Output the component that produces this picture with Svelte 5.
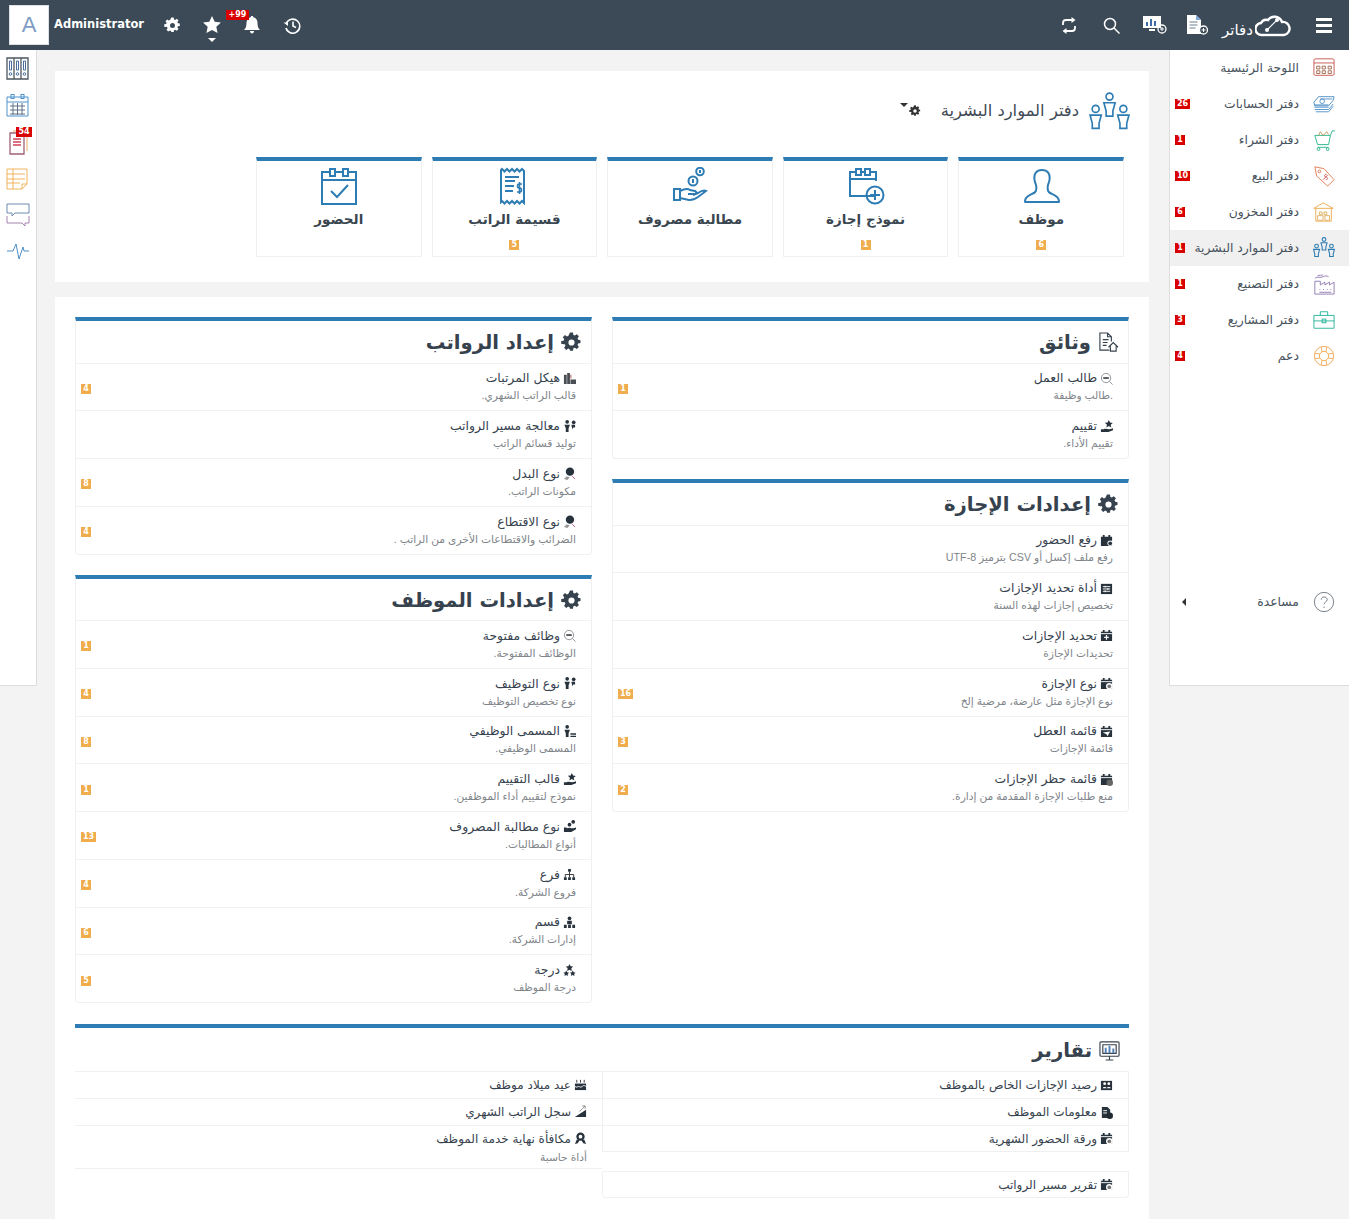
<script>
  const B = "#2e7cb4";

  // 40x40 hr figures, reused in the sidebar and the page header
  const figure = (x, y) =>
    `<circle cx="${x}" cy="${y}" r="3.400"/><path d="M${x - 5.5} ${y + 6}h11l-2.200 8v5h-6.600v-5z"/>`;
  const people = figure(20, 4.5) + figure(6.5, 16.5) + figure(33.5, 16.5);

  const bigIcons = {
    user: `<path d="M20 3c-6 0-8 4-7.600 9 .2 3 1 4 1.600 6 .7 3 .6 5-.8 7-2 2.400-9 3-10 8-.3 1.500 0 2 0 2h33.600s.3-.5 0-2c-1-5-8-5.600-10-8-1.400-2-1.500-4-.8-7 .6-2 1.400-3 1.600-6 .4-5-1.600-9-7.600-9z"/>`,
    leave: `<path d="M27 29H3V5h6M18 5h-4M23 5h6v9"/><path d="M3 12h26"/><rect x="9" y="2" width="5" height="6"/><rect x="18" y="2" width="5" height="6"/><circle cx="28" cy="28" r="8.500"/><path d="M23 28h10M28 23v10"/>`,
    claim: `<path d="M3 22h6v11H3zM9 24c4-2 7-3 10-1l5 1c2 .5 1.500 3-1 3h-6M9 31l9 2c3 .5 6-1 9-3l8-6c-2-1-5 0-8 2l-5 2"/><circle cx="22" cy="14" r="4.500"/><path d="M22 12v4"/><circle cx="29" cy="4.500" r="3.800"/><path d="M29 3v3"/>`,
    slip: `<path d="M7 2l2.500 2.500L12 2l2.500 2.500L17 2l2.500 2.500L22 2l2.500 2.500L27 2l2 2v32l-2-2-2.500 2.500L22 34l-2.500 2.500L17 34l-2.500 2.500L12 34l-2.500 2.500L7 34l-1 1V3z"/><path d="M10 10h14M10 14h10M10 19h9M10 24h8"/><path d="M27 17h-3c-2 0-2 4 0 4h1c2 0 2 4 0 4h-3M24.500 15v12" stroke-width="1.600"/>`,
    attend: `<path d="M9 5H2v32h34V5h-7M22 5h-6"/><path d="M2 13h34"/><rect x="10" y="2" width="5" height="7"/><rect x="23" y="2" width="5" height="7"/><path d="M11 24l6 6 11-12"/>`
  };

  const sideIcons = {
    dash: `<g stroke="#c9544f"><rect x="1" y="2" width="22" height="18" rx="1.500"/><path d="M1 6.500h22"/></g><g stroke="#a0664f"><path d="M4 10h3.500v3H4zM10 10h3.500v3H10zM16.500 10h3.500v3h-3.500zM4 15h3.500v3H4zM10 15h3.500v3H10zM16.500 15h3.500v3h-3.500z"/></g>`,
    money: `<g stroke="#4f8fc7"><path d="M1 10l5-6h17l-1 4-5 6H2zM1 13h16M1.500 15.500h15.500M2 18h15l5-6M3 20.500h14l5-6M8 6.500h13"/><circle cx="10" cy="9" r="2.500"/></g>`,
    cart: `<g stroke="#2bb58a"><path d="M2 7h17l-2 10H5zM19 7l2-5h3M5 20h12"/><circle cx="6" cy="22" r="1.500"/><circle cx="16" cy="22" r="1.500"/></g><path d="M6 7l2-4 3 4M11 7l4-4 2 3" stroke="#c09050"/>`,
    tag: `<g stroke="#e0784f"><path d="M2 2l10 2 11 12-7 7L4 12z"/><circle cx="7" cy="7" r="1.500"/></g><path d="M15 10c-3 0-3 3-1 3s3 3 0 3M11 16l5-5" stroke="#c9544f"/>`,
    stock: `<g stroke="#eda851"><path d="M1 8L11 2l11 6zM3 8v14h17V8"/><path d="M7 12h3v3H7zM12 12h3v3h-3zM5 16h6v5H5zM13 16h5v5h-5z" stroke="#e0b060"/></g>`,
    hr: people,
    factory: `<g stroke="#8f7ab0"><path d="M2 9v14h21V10l-5 3v-3l-5 3v-3l-5 3V9z"/><path d="M7 18h1M11 18h1M15 18h1M19 18h1M7 21h13"/><path d="M2 6c3-3 6 0 9-2 2-1 4-1 6 0M5 3c2-1 4 0 6-1"/></g>`,
    brief: `<g stroke="#25b199"><path d="M1 7h22v14H1zM1 13h22M8 7V3h8v4"/><rect x="10" y="11" width="4" height="4"/></g>`,
    buoy: `<g stroke="#eda851"><circle cx="12" cy="12" r="10.500"/><circle cx="12" cy="12" r="5"/><path d="M9 2l.8 5.500M15 2l-.8 5.500M9 22l.8-5.500M15 22l-.8-5.500M2 9l5.500.8M2 15l5.500-.8M22 9l-5.500.8M22 15l-5.500-.8"/></g>`
  };

  const railIcons = {
    binder: `<g stroke="#4d5660" stroke-width="1.300"><path d="M1 2h7v21H1zM8 2h7v21H8zM15 2h7v21h-7z"/></g><g stroke="#4a6f9f"><path d="M3.500 5h2v9h-2zM10.500 5h2v9h-2zM17.500 5h2v9h-2z"/><circle cx="4.500" cy="18" r="1.300"/><circle cx="11.500" cy="18" r="1.300"/><circle cx="18.500" cy="18" r="1.300"/></g>`,
    cal: `<g stroke="#4f93cc"><path d="M1 4h21v19H1zM1 9h21"/><rect x="5" y="1.500" width="3" height="4"/><rect x="15" y="1.500" width="3" height="4"/></g><path d="M4 13h15M4 17h15M4 21h15M7 10v12M11.500 10v12M16 10v12" stroke="#5d7288"/>`,
    clip: `<path d="M4 4h14v21H4z" stroke="#a06078" stroke-width="1.300"/><path d="M7 2h14v20" stroke="#e8ac60"/><path d="M7 10h8M7 13h8M7 16h8" stroke="#d4405a" stroke-width="1.500"/>`,
    sheet: `<g stroke="#f0b45c"><path d="M1 3h20v15l-5 5H1zM16 23v-5h5"/><path d="M1 8h18M1 13h18M1 17h13M7 3v20"/></g>`,
    chat: `<path d="M1 2h22v9H9l-3 3v-3H1z" stroke="#6f8bb2"/><path d="M1 14v7h15l3 3v-3h4v-7" stroke="#a583ae"/>`,
    pulse: `<path d="M1 12h6l3-7 3 15 4-12 1 4h5" stroke="#4f8fc7"/>`
  };

  // solid dark glyphs next to list rows, drawn on a 14x14 box
  const cal = `<path d="M1 3h12v10H1zM3 1h2v2H3zM9 1h2v2H9z"/>`;
  const small = {
    search: `<g fill="none" stroke="#8a8f96"><circle cx="6.500" cy="6.500" r="5"/><path d="M10 10l3.500 3.500"/></g><path d="M3.500 5.500h6v2h-6z" fill="#555"/>`,
    star: `<path d="M9.500 0l1.300 2.800 3 .3-2.300 2 .7 3-2.700-1.600L6.800 8l.7-3-2.300-2 3-.3zM1 10h3v3H1zM4 10c2-1 4 0 6 0s3-1 4-1v2l-5 2H4z"/>`,
    gearCal: cal + `<circle cx="11" cy="10" r="3" fill="#fff"/><circle cx="11" cy="10" r="2"/>`,
    list: `<path d="M1 2h12v11H1z"/><path d="M3 5h8M3 7.500h8M3 10h8" stroke="#fff"/><path d="M5 4h1v2H5zM8 6.500h1v2H8zM5 9h1v2H5z" fill="#fff"/>`,
    calPlus: cal + `<path d="M1 5h12" stroke="#fff"/><path d="M4.500 9h5M7 6.500v5" stroke="#fff" stroke-width="1.300"/>`,
    calCog: cal + `<path d="M1 5h12" stroke="#fff"/><circle cx="10" cy="10" r="3.500" fill="#fff"/><circle cx="10" cy="10" r="2" fill="#777"/>`,
    calPlane: cal + `<path d="M1 5h12" stroke="#fff"/><path d="M3 8l8-1-3 5-1-2z" fill="#fff"/>`,
    calShield: cal + `<path d="M1 5h12" stroke="#fff"/><circle cx="10.500" cy="10.500" r="3.500" fill="#666"/>`,
    stack: `<path d="M1 3h3v10H1zM4.500 1h3v12h-3zM8 8h6v5H8z" fill="#4a4f55"/><path d="M8 3h1v4H8z" fill="#b05050"/>`,
    run: `<circle cx="4.500" cy="2" r="2"/><path d="M1.500 5h6l-1.500 4v4H3V9z"/><circle cx="11.500" cy="2.500" r="2"/><path d="M9 5h4v3h-2l-1 2z"/>`,
    title: `<circle cx="4.500" cy="2" r="2"/><path d="M1.500 5h6l-1.500 4v4H3V9zM8 9h6v1.500H8zM8 11.500h6V13H8z"/>`,
    coinHand: `<circle cx="7.500" cy="5" r="4.500"/><path d="M1 13l3-3 3 1-2 3" fill="#999"/><path d="M10 10l3 3" stroke="#b58" fill="none"/>`,
    claim: `<circle cx="11" cy="2" r="2"/><circle cx="7" cy="5" r="2"/><path d="M1 8h3v5H1zM4 9c2-1 4-1 5 0h2l3-1v2l-5 3H4z"/>`,
    tree: `<path d="M5.500 1h3v3h-3zM1 10h3v3H1zM5.500 10h3v3h-3zM10 10h3v3h-3z"/><path d="M7 4v6M2.500 10V7h9v3" stroke="#333" fill="none"/>`,
    dept: `<circle cx="7" cy="2.500" r="2"/><path d="M4.500 5h5v4h-5zM1 9.500h3V13H1zM5.500 9.500h3V13h-3zM10 9.500h3V13h-3z"/>`,
    grade: `<path d="M7 0l1.200 2.500 2.800.3-2 1.900.5 2.800L7 6.200 4.500 7.500 5 4.700l-2-1.900 2.800-.3zM3.500 7l1 2 2 .3-1.500 1.400.4 2.100-1.900-1-1.900 1 .4-2.100L.5 9.300l2-.3zM10.500 7l1 2 2 .3-1.500 1.400.4 2.100-1.900-1-1.900 1 .4-2.100-1.500-1.400 2-.3z"/>`,
    cake: `<path d="M1 6h12v7H1z"/><path d="M3 2v3M7 2v3M11 2v3" stroke="#333"/><path d="M1 9c2 2 3 0 4 0s2 2 4 0 3 0 4 0" stroke="#fff" fill="none"/>`,
    chart: `<path d="M1 13L13 5v8z"/><path d="M6 7l6-6M9 1h3v3" stroke="#888" fill="none"/>`,
    medal: `<circle cx="7" cy="5" r="4.500"/><circle cx="7" cy="5" r="2" fill="#fff"/><path d="M3 8l-2 5 3-1 2-3zM11 8l2 5-3-1-2-3z"/>`,
    people: `<path d="M1 2h12v10H1z"/><circle cx="5" cy="5" r="1.500" fill="#fff"/><circle cx="9.500" cy="5" r="1.500" fill="#fff"/><path d="M3 10c0-2 4-2 4 0zM7.500 10c0-2 4-2 4 0z" fill="#fff"/>`,
    info: `<path d="M2 1h6l3 3v9H2z"/><circle cx="10.500" cy="10.500" r="3.500" fill="#1f2a33"/><path d="M3.500 5h4M3.500 7.500h4" stroke="#fff"/>`
  };

  const gear = "M7.300.5h2.400l.3 1.900 1.200.5 1.600-1.100 1.700 1.700-1.100 1.600.5 1.200 1.900.3v2.400l-1.900.3-.5 1.200 1.100 1.600-1.700 1.700-1.600-1.100-1.200.5-.3 1.900H7.300L7 13.900l-1.200-.5-1.600 1.100-1.700-1.700 1.100-1.600-.5-1.200L.2 9.700V7.300L2.100 7l.5-1.200-1.100-1.600 1.700-1.700 1.600 1.100L6 3.100zM8.500 6a2.500 2.500 0 1 0 0 5 2.500 2.500 0 0 0 0-5z";

  const sideItems = [
    { label: "اللوحة الرئيسية", icon: "dash" },
    { label: "دفتر الحسابات", icon: "money", badge: 26 },
    { label: "دفتر الشراء", icon: "cart", badge: 1 },
    { label: "دفتر البيع", icon: "tag", badge: 10 },
    { label: "دفتر المخزون", icon: "stock", badge: 6 },
    { label: "دفتر الموارد البشرية", icon: "hr", badge: 1, active: true },
    { label: "دفتر التصنيع", icon: "factory", badge: 1 },
    { label: "دفتر المشاريع", icon: "brief", badge: 3 },
    { label: "دعم", icon: "buoy", badge: 4 }
  ];

  const rail = ["binder", "cal", "clip", "sheet", "chat", "pulse"];

  const shortcuts = [
    { label: "موظف", icon: "user", badge: 6 },
    { label: "نموذج إجازة", icon: "leave", badge: 1 },
    { label: "مطالبة مصروف", icon: "claim" },
    { label: "قسيمة الراتب", icon: "slip", badge: 5 },
    { label: "الحضور", icon: "attend" }
  ];

  const rightCards = [
    {
      title: "وثائق", icon: "doc",
      items: [
        { t: "طالب العمل", d: ".طالب وظيفة", i: "search", b: 1 },
        { t: "تقييم", d: "تقييم الأداء.", i: "star" }
      ]
    },
    {
      title: "إعدادات الإجازة", icon: "gear",
      items: [
        { t: "رفع الحضور", d: "رفع ملف إكسل أو CSV بترميز UTF-8", i: "gearCal" },
        { t: "أداة تحديد الإجازات", d: "تخصيص إجازات لهذه السنة", i: "list" },
        { t: "تحديد الإجازات", d: "تحديدات الإجازة", i: "calPlus" },
        { t: "نوع الإجازة", d: "نوع الإجازة مثل عارضة، مرضية إلخ", i: "calCog", b: 16 },
        { t: "قائمة العطل", d: "قائمة الإجازات", i: "calPlane", b: 3 },
        { t: "قائمة حظر الإجازات", d: "منع طلبات الإجازة المقدمة من إدارة.", i: "calShield", b: 2 }
      ]
    }
  ];

  const leftCards = [
    {
      title: "إعداد الرواتب", icon: "gear",
      items: [
        { t: "هيكل المرتبات", d: "قالب الراتب الشهري.", i: "stack", b: 4 },
        { t: "معالجة مسير الرواتب", d: "توليد قسائم الراتب", i: "run" },
        { t: "نوع البدل", d: "مكونات الراتب.", i: "coinHand", b: 8 },
        { t: "نوع الاقتطاع", d: "الضرائب والاقتطاعات الأخرى من الراتب .", i: "coinHand", b: 4 }
      ]
    },
    {
      title: "إعدادات الموظف", icon: "gear",
      items: [
        { t: "وظائف مفتوحة", d: "الوظائف المفتوحة.", i: "search", b: 1 },
        { t: "نوع التوظيف", d: "نوع تخصيص التوظيف", i: "run", b: 4 },
        { t: "المسمى الوظيفي", d: "المسمى الوظيفي.", i: "title", b: 8 },
        { t: "قالب التقييم", d: "نموذج لتقييم أداء الموظفين.", i: "star", b: 1 },
        { t: "نوع مطالبة المصروف", d: "أنواع المطالبات.", i: "claim", b: 13 },
        { t: "فرع", d: "فروع الشركة.", i: "tree", b: 4 },
        { t: "قسم", d: "إدارات الشركة.", i: "dept", b: 6 },
        { t: "درجة", d: "درجة الموظف", i: "grade", b: 5 }
      ]
    }
  ];

  const reportsRight = [
    { t: "رصيد الإجازات الخاص بالموظف", i: "people" },
    { t: "معلومات الموظف", i: "info" },
    { t: "ورقة الحضور الشهرية", i: "calCog" }
  ];
  const reportsLeft = [
    { t: "عيد ميلاد موظف", i: "cake" },
    { t: "سجل الراتب الشهري", i: "chart" },
    { t: "مكافأة نهاية خدمة الموظف", d: "أداة حاسبة", i: "medal" }
  ];
</script>

{#snippet cardTitle(title, icon)}
  <h2 class="card-title">
    {#if icon === "gear"}
      <svg class="title-icon" viewBox="0 0 17 17"><path d={gear} fill="#36424e" fill-rule="evenodd" /></svg>
    {:else if icon === "doc"}
      <svg class="title-icon" viewBox="0 0 22 22" fill="none" stroke="#36424e" stroke-width="1.200">
        <path d="M12 19H2V1h8l4 4v5M10 1v4h4M5 8h6M5 11h5M5 14h4" />
        <path d="M11 16l5-5 5 5M13 15v5h6v-5" />
      </svg>
    {:else}
      <svg class="title-icon" viewBox="0 0 22 22" fill="none" stroke="#36424e" stroke-width="1.200">
        <rect x="1" y="2" width="20" height="15" rx="1" />
        <path d="M7 21h8M11 17v4" />
        <path d="M4 5h14v9H4z" />
        <path d="M7 8v6M11 6v8M15 9v5" stroke-width="2" stroke="#4f7fb5" />
      </svg>
    {/if}
    <span>{title}</span>
  </h2>
{/snippet}

{#snippet rowIcon(name)}
  <svg class="row-icon" viewBox="0 0 14 14" fill="#27323c">{@html small[name]}</svg>
{/snippet}

{#snippet listCard(card)}
  <section class="card">
    {@render cardTitle(card.title, card.icon)}
    {#each card.items as item}
      <div class="row">
        <div class="row-text">
          <div class="row-title">{@render rowIcon(item.i)}<span>{item.t}</span></div>
          <div class="row-desc">{item.d}</div>
        </div>
        {#if item.b}<span class="count">{item.b}</span>{/if}
      </div>
    {/each}
  </section>
{/snippet}

<header class="topbar">
  <div class="top-left">
    <div class="avatar">A</div>
    <span class="user">Administrator</span>
    <div class="top-icons">
      <span class="top-btn">
        <svg width="17" height="17" viewBox="0 0 17 17"><path d={gear} fill="#fff" fill-rule="evenodd" /></svg>
      </span>
      <span class="top-btn">
        <svg width="18" height="18" viewBox="0 0 18 18"><path d="M9 0l2.700 5.800 6.300.7-4.700 4.300 1.300 6.200L9 14l-5.600 3 1.300-6.200L0 6.500l6.300-.7z" fill="#fff" /></svg>
        <i class="caret"></i>
      </span>
      <span class="top-btn">
        <svg width="16" height="18" viewBox="0 0 16 18"><path d="M8 0c1 0 1.300.7 1.300 1.300C12 2 13.500 4 13.500 7c0 4 1 5.500 2.500 7H0c1.500-1.500 2.500-3 2.500-7 0-3 1.500-5 4.200-5.700C6.700.7 7 0 8 0zM6 15h4c0 1.500-1 2.500-2 2.500S6 16.500 6 15z" fill="#fff" /></svg>
        <b class="bell-count">+99</b>
      </span>
      <span class="top-btn">
        <svg width="18" height="17" viewBox="0 0 18 17" fill="none" stroke="#fff" stroke-width="1.600"><path d="M3.500 6A7 7 0 1 1 3 11" /><path d="M.5 5.500h4.500V9z" fill="#fff" stroke="none" /><path d="M10 4.500V9l3 1.500" /></svg>
      </span>
    </div>
  </div>
  <div class="top-right">
    <span class="top-btn">
      <svg width="16" height="17" viewBox="0 0 16 17" fill="none" stroke="#fff" stroke-width="1.800"><path d="M2 8V6a3 3 0 0 1 3-3h8M14 9v2a3 3 0 0 1-3 3H3" /><path d="M10.500 0l4 3-4 3zM5.500 11l-4 3 4 3z" fill="#fff" stroke="none" /></svg>
    </span>
    <span class="top-btn">
      <svg width="17" height="17" viewBox="0 0 17 17" fill="none" stroke="#fff" stroke-width="1.500"><circle cx="7" cy="7" r="5.500" /><path d="M11 11l5.500 5.500" /></svg>
    </span>
    <span class="top-btn">
      <svg width="24" height="18" viewBox="0 0 24 18"><path d="M0 0h18v12H0z" fill="#fff" /><path d="M3 10V6h2v4zM7 10V3h2v7zM11 10V5h2v5z" fill="#3c6da8" /><path d="M6 13h6v2H6z" fill="#fff" /><circle cx="19" cy="13" r="4" fill="none" stroke="#fff" stroke-width="1.300" /><path d="M17 13h4M19 11v4" stroke="#fff" /></svg>
    </span>
    <span class="top-btn">
      <svg width="21" height="20" viewBox="0 0 21 20"><path d="M0 0h9l5 5v14H0z" fill="#fff" /><path d="M2.500 7h8M2.500 10h8M2.500 13h6" stroke="#6f7f8f" /><path d="M9 0v5h5z" fill="#7fa6d8" /><circle cx="16.500" cy="15" r="4" fill="#3b4a56" stroke="#fff" stroke-width="1.300" /><path d="M14.500 15h4M16.500 13v4" stroke="#fff" /></svg>
    </span>
    <div class="brand">
      <span>دفاتر</span>
      <svg width="36" height="24" viewBox="0 0 36 24" fill="none" stroke="#fff" stroke-width="2.400"><path d="M9 22H7A6 6 0 0 1 6 10a6 6 0 0 1 7-3A8 8 0 0 1 27 9a6.500 6.500 0 0 1 2 13h-2" /><path d="M9 22h18" /><path d="M12 17l10-10" stroke-width="1.200" /><circle cx="12" cy="17" r="2" fill="#fff" stroke="none" /><circle cx="22" cy="7" r="2" fill="#fff" stroke="none" /></svg>
    </div>
    <div class="burger"><i></i><i></i><i></i></div>
  </div>
</header>

<div class="layout">
  <aside class="rail">
    {#each rail as name}
      <div class="rail-item">
        <svg width="24" height="26" viewBox="0 0 24 26" fill="none">{@html railIcons[name]}</svg>
        {#if name === "clip"}<b class="rail-count">54</b>{/if}
      </div>
    {/each}
  </aside>

  <main class="main">
    <section class="panel hero">
      <div class="hero-head">
        <svg class="hero-icon" viewBox="0 0 40 40" fill="none" stroke={B} stroke-width="1.600">{@html people}</svg>
        <h1>دفتر الموارد البشرية</h1>
        <svg class="hero-gear" viewBox="0 0 17 17"><path d={gear} fill="#333" fill-rule="evenodd" /></svg>
        <i class="hero-caret"></i>
      </div>
      <div class="shortcuts">
        {#each shortcuts as s}
          <article class="shortcut">
            <svg class="shortcut-icon" viewBox="0 0 38 38" fill="none" stroke={B} stroke-width="2">{@html bigIcons[s.icon]}</svg>
            <strong>{s.label}</strong>
            {#if s.badge}<span class="count">{s.badge}</span>{/if}
          </article>
        {/each}
      </div>
    </section>

    <section class="panel content">
      <div class="columns">
        <div class="stack">
          {#each rightCards as card}{@render listCard(card)}{/each}
        </div>
        <div class="stack">
          {#each leftCards as card}{@render listCard(card)}{/each}
        </div>
      </div>

      <section class="reports">
        {@render cardTitle("تقارير", "report")}
        <div class="report-cols">
          <div class="report-col first">
            {#each reportsRight as r}
              <div class="report-row">{@render rowIcon(r.i)}<span>{r.t}</span></div>
            {/each}
            <div class="report-row detached">{@render rowIcon("calCog")}<span>تقرير مسير الرواتب</span></div>
          </div>
          <div class="report-col">
            {#each reportsLeft as r}
              <div class="report-row">
                <div class="row-title">{@render rowIcon(r.i)}<span>{r.t}</span></div>
                {#if r.d}<div class="row-desc">{r.d}</div>{/if}
              </div>
            {/each}
          </div>
        </div>
      </section>
    </section>
  </main>

  <aside class="sidebar">
    {#each sideItems as item}
      <div class="side-item" class:active={item.active}>
        <svg class="side-icon" viewBox={item.icon === "hr" ? "0 0 40 40" : "0 0 24 24"} fill="none" stroke={B} stroke-width={item.icon === "hr" ? 2 : 1}>{@html sideIcons[item.icon]}</svg>
        <span class="side-label">{item.label}</span>
        {#if item.badge}<b class="side-count">{item.badge}</b>{/if}
      </div>
    {/each}
    <div class="side-help">
      <svg class="side-icon" viewBox="0 0 24 24" fill="none" stroke="#6b7580"><circle cx="12" cy="12" r="10.500" /><path d="M9 9.500c0-4 6.500-4 6.500 0 0 2.500-3.500 2.500-3.500 5M12 17v1.500" /></svg>
      <span class="side-label">مساعدة</span>
      <i class="help-caret"></i>
    </div>
  </aside>
</div>

<style>
  :global(body) {
    margin: 0;
    background: #f3f3f3;
    font-family: "Liberation Sans", "DejaVu Sans", sans-serif;
    color: #36424e;
    height: 1219px;
    overflow: hidden;
  }

  .topbar {
    height: 50px;
    background: #3b4a56;
    display: flex;
    justify-content: space-between;
    align-items: center;
    color: #fff;
  }

  .top-left,
  .top-right,
  .top-icons {
    display: flex;
    align-items: center;
  }

  .top-left {
    padding-left: 9px;
  }

  .avatar {
    width: 38px;
    height: 38px;
    background: #fff;
    border: 1px solid #dde1e5;
    color: #7e9cc4;
    font-size: 22px;
    display: flex;
    align-items: center;
    justify-content: center;
  }

  .user {
    margin-left: 5px;
    width: 98px;
    font: bold 11.5px "DejaVu Sans", sans-serif;
    position: relative;
    top: -1px;
  }

  .top-btn {
    width: 40px;
    height: 50px;
    display: flex;
    align-items: center;
    justify-content: center;
    position: relative;
  }

  .caret {
    position: absolute;
    left: 16px;
    top: 38px;
    border: 4px solid transparent;
    border-top-color: #fff;
    border-bottom: 0;
  }

  .bell-count {
    position: absolute;
    left: -6px;
    top: 10px;
    width: 23px;
    height: 10px;
    background: #d90000;
    color: #fff;
    font: bold 8px/10px "DejaVu Sans", sans-serif;
    text-align: center;
  }

  .top-right {
    padding-right: 17px;
  }

  .top-right .top-btn {
    width: 43px;
  }

  .brand {
    display: flex;
    align-items: center;
    margin-left: 3px;
    gap: 2px;
    width: 69px;
    font: 15px "DejaVu Sans", sans-serif;
  }

  .brand span {
    position: relative;
    top: 5px;
  }

  .burger {
    width: 16px;
    margin-left: 25px;
    display: grid;
    gap: 3px;
  }

  .burger i {
    height: 3px;
    background: #fff;
  }

  .layout {
    display: grid;
    grid-template-columns: 37px 1fr 181px;
  }

  .rail {
    height: 636px;
    background: #fff;
    border-right: 1px solid #ddd;
    box-sizing: border-box;
    border-bottom: 1px solid #ddd;
    padding-top: 1px;
  }

  .rail-item {
    height: 36.5px;
    display: flex;
    align-items: center;
    justify-content: center;
    position: relative;
  }

  .rail-count {
    position: absolute;
    left: 16px;
    top: 3px;
    width: 16px;
    height: 10px;
    background: #d90000;
    color: #fff;
    font: bold 8px/10px "DejaVu Sans", sans-serif;
    text-align: center;
  }

  .main {
    margin: 21px 20px 0 18px;
    display: grid;
    gap: 15px;
    align-content: start;
  }

  .panel {
    background: #fff;
    direction: rtl;
  }

  .hero {
    height: 211px;
    box-sizing: border-box;
    padding: 21px 19px 0;
  }

  .hero-head {
    display: flex;
    align-items: center;
    height: 40px;
    position: relative;
  }

  .hero-icon {
    width: 41px;
    height: 41px;
  }

  .hero-head h1 {
    margin: 0 10px 0 0;
    font: 16.4px "DejaVu Sans", sans-serif;
    color: #3f4a55;
    position: relative;
    top: -2px;
  }

  .hero-gear {
    width: 12px;
    height: 12px;
    margin-right: 20px;
    position: relative;
    top: -1px;
  }

  .hero-caret {
    margin-right: 1px;
    border: 4.500px solid transparent;
    border-top-color: #333;
    border-bottom: 0;
    position: relative;
    top: -7px;
  }

  .shortcuts {
    width: 868px;
    margin: 25px 6px 0 0;
    display: grid;
    grid-template-columns: repeat(5, 1fr);
    gap: 10px;
  }

  .shortcut {
    height: 100px;
    box-sizing: border-box;
    border: 1px solid #f0f0f0;
    border-top: 4px solid #2e7cb4;
    display: flex;
    flex-direction: column;
    align-items: center;
    padding-top: 6px;
    position: relative;
  }

  .shortcut-icon {
    width: 38px;
    height: 38px;
  }

  .shortcut strong {
    font: bold 13.5px "DejaVu Sans", sans-serif;
    color: #3a4650;
    margin-top: 6px;
  }

  .shortcut .count {
    position: absolute;
    bottom: 6px;
  }

  .count {
    display: inline-block;
    min-width: 6px;
    height: 10px;
    padding: 0 2px;
    background: #f0ad4e;
    color: #fff;
    font: bold 8px/10px "DejaVu Sans", sans-serif;
    text-align: center;
  }

  .content {
    padding: 20px;
    height: 922px;
    box-sizing: border-box;
  }

  .columns {
    display: grid;
    grid-template-columns: 1fr 1fr;
    gap: 20px;
    align-items: start;
  }

  .stack {
    display: grid;
    gap: 20px;
  }

  .card {
    border: 1px solid #f0f0f0;
    border-top: 4px solid #2e7cb4;
    border-radius: 0 0 4px 4px;
    box-sizing: border-box;
  }

  .card-title {
    margin: 0;
    height: 41.5px;
    box-sizing: border-box;
    padding-top: 2px;
    display: flex;
    align-items: center;
    gap: 7px;
    padding-right: 9px;
    font: bold 19.6px "DejaVu Sans", sans-serif;
    color: #36424e;
  }

  .reports .card-title {
    height: 42.5px;
  }

  .title-icon {
    width: 21px;
    height: 21px;
    flex: none;
  }

  .row {
    height: 47.75px;
    box-sizing: border-box;
    border-top: 1px solid #f2f2f2;
    padding: 0 15px 0 5px;
    display: flex;
    justify-content: space-between;
    align-items: center;
  }

  .row .count {
    position: relative;
    top: 2px;
  }

  .row-text {
    margin-bottom: 1px;
  }

  .row-title {
    display: flex;
    align-items: center;
    gap: 3px;
    font: 12.4px/18px "DejaVu Sans", sans-serif;
    color: #36424e;
  }

  .row-icon {
    width: 13px;
    height: 13px;
    flex: none;
  }

  .row-desc {
    font: 10.7px/16px "Liberation Sans", "DejaVu Sans", sans-serif;
    color: #80858a;
  }

  .reports {
    margin-top: 21px;
    border-top: 4px solid #2e7cb4;
  }

  .report-cols {
    display: grid;
    grid-template-columns: 527px 527px;
  }

  .report-col {
    align-self: start;
  }

  .report-row {
    min-height: 27px;
    box-sizing: border-box;
    border-top: 1px solid #f2f2f2;
    padding: 4px 15px 3px;
    display: flex;
    align-items: center;
    gap: 3px;
    font: 12px/18px "DejaVu Sans", sans-serif;
    color: #36424e;
  }

  .report-row .row-title {
    font-size: 12px;
  }

  .first .report-row {
    border-left: 1px solid #f0f0f0;
    border-right: 1px solid #f0f0f0;
  }

  .first .report-row:nth-child(3) {
    border-bottom: 1px solid #f0f0f0;
  }

  .report-col:not(.first) .report-row {
    display: block;
  }

  .report-col:not(.first) .report-row:last-child {
    border-bottom: 1px solid #f0f0f0;
  }

  .report-col:not(.first) .row-desc {
    margin-top: 1px;
  }

  .first .report-row.detached {
    margin-top: 19px;
    border-bottom: 1px solid #f0f0f0;
    border-radius: 0 0 4px 4px;
  }

  .sidebar {
    height: 636px;
    box-sizing: border-box;
    background: #fff;
    border-left: 1px solid #ddd;
    border-bottom: 1px solid #ddd;
    direction: rtl;
    display: flex;
    flex-direction: column;
    position: relative;
  }

  .side-item {
    height: 36px;
    flex: none;
    display: flex;
    align-items: center;
    padding: 0 15px 0 5px;
  }

  .side-item.active {
    background: #f0f0f0;
  }

  .side-icon {
    width: 22px;
    height: 22px;
    flex: none;
  }

  .side-label {
    margin-right: 14px;
    font: 12.4px "DejaVu Sans", sans-serif;
    color: #47525c;
    white-space: nowrap;
    position: relative;
    top: -1px;
  }

  .side-count {
    margin-right: auto;
    min-width: 6px;
    height: 10px;
    padding: 0 2px;
    background: #d90000;
    color: #fff;
    font: bold 8px/10px "DejaVu Sans", sans-serif;
    text-align: center;
  }

  .side-help {
    position: absolute;
    top: 541px;
    left: 0;
    right: 0;
    height: 22px;
    display: flex;
    align-items: center;
    padding: 0 15px 0 12px;
  }

  .help-caret {
    margin-right: auto;
    border: 4px solid transparent;
    border-right-color: #333;
    border-left: 0;
  }
</style>
